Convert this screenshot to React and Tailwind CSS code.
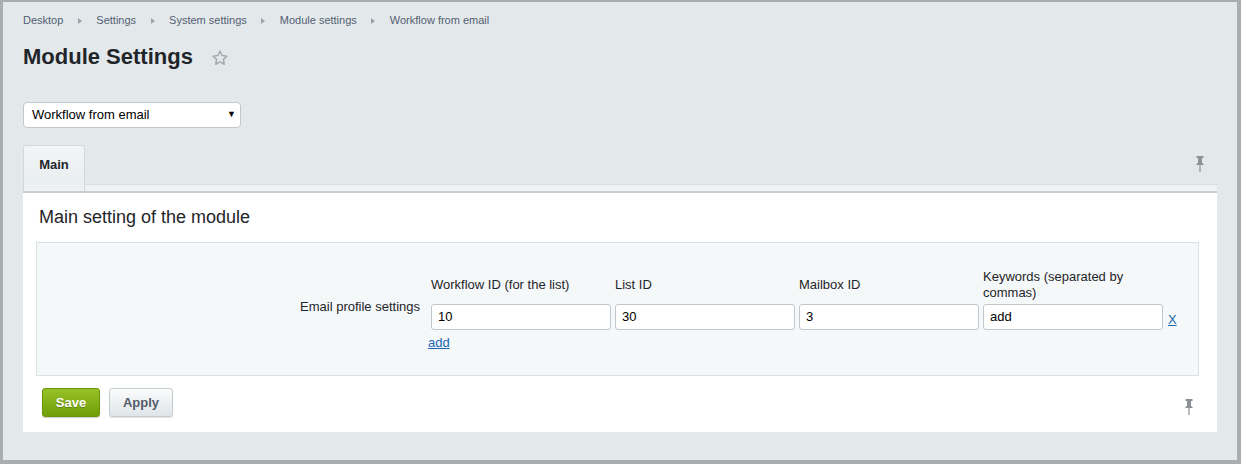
import React from "react";

const crumbs = [
  "Desktop",
  "Settings",
  "System settings",
  "Module settings",
  "Workflow from email",
];

const columns = [
  { label: "Workflow ID (for the list)", value: "10" },
  { label: "List ID", value: "30" },
  { label: "Mailbox ID", value: "3" },
  { label: "Keywords (separated by commas)", value: "add" },
];

function Pin({ className = "" }) {
  return (
    <svg viewBox="0 0 10 16" className={className} fill="#8c9297">
      <rect x="1.5" y="0" width="7" height="2" rx="0.5" />
      <rect x="3" y="2" width="4" height="5" />
      <path d="M1 9 L2.5 7 H7.5 L9 9 Z" />
      <rect x="4.4" y="9" width="1.2" height="7" />
    </svg>
  );
}

function Star() {
  return (
    <svg viewBox="0 0 24 24" className="h-[18px] w-[18px]" fill="none" stroke="#a4aab0" strokeWidth="2" strokeLinejoin="round">
      <path d="M12 2.8l2.8 5.9 6.4.8-4.7 4.4 1.2 6.4L12 17.2l-5.7 3.1 1.2-6.4-4.7-4.4 6.4-.8z" />
    </svg>
  );
}

export default function App() {
  return (
    <div
      className="h-[464px] w-[1241px] overflow-hidden border-t-2 border-r-4 border-b-4 border-l-[3px] border-[#a9adb0] bg-[#e3e9eb] px-5 text-[13px] text-black"
      style={{ fontFamily: '"Liberation Sans", Arial, sans-serif' }}
    >
      {/* breadcrumbs */}
      <div className="flex h-[36px] items-center pt-[1px] text-[11px] text-[#535e72]">
        {crumbs.map((c, i) => (
          <React.Fragment key={c}>
            {i > 0 && (
              <span className="mx-[14.5px] inline-block h-0 w-0 border-y-[3px] border-l-[4px] border-y-transparent border-l-[#9aa2ab]" />
            )}
            <span>{c}</span>
          </React.Fragment>
        ))}
      </div>

      {/* title */}
      <div className="mt-[4px] flex h-[30px] items-center">
        <h1 className="text-[22px] font-bold leading-none text-[#1f2529]">Module Settings</h1>
        <span className="ml-[18px] mt-[2px]">
          <Star />
        </span>
      </div>

      {/* module select */}
      <div className="mt-[30px] flex h-[26px] w-[218px] items-center justify-between rounded-[4px] border border-[#c3c7cb] bg-white pr-[4px] pl-[8px]">
        <span>Workflow from email</span>
        <span className="text-[9px]">▼</span>
      </div>

      {/* tabs */}
      <div className="mt-[17px]">
        <div className="flex items-end justify-between">
          <div className="flex h-[39px] w-[62px] items-center justify-center rounded-t-[3px] border border-b-0 border-[#d3d8db] bg-gradient-to-b from-[#f2f5f6] to-[#e9eef0] font-bold text-[#1f2529]">
            Main
          </div>
          <Pin className="mb-[12px] mr-[12px] h-[16px] w-[10px]" />
        </div>
        <div className="flex h-[7px]">
          <div className="w-[62px] border-x border-[#d3d8db] bg-[#edf1f3]" />
          <div className="flex-1 border-t border-[#d8dde0] bg-[#eef2f3]" />
        </div>
        <div className="h-[2px] bg-[#c9ced1]" />

        {/* panel */}
        <div className="h-[239px] bg-white pl-[13px] pr-[18px] pt-[13px]">
          <h2 className="pl-[3px] text-[18px] leading-[22px] text-[#1f2529]">Main setting of the module</h2>

          <div className="mt-[14px] flex h-[134px] border border-[#dce1e3] bg-[#f5f8f9] pt-[26px]">
            <div className="w-[383px] pt-[30px] text-right leading-[16px] text-[#1f2529]">Email profile settings</div>
            <div className="ml-[11px]">
              <div className="flex gap-[4px]">
                {columns.map((col) => (
                  <div key={col.label} className="w-[180px]">
                    <div className="flex h-[32px] items-center leading-[16px] text-[#1f2529]">{col.label}</div>
                    <div className="mt-[3px] flex h-[26px] items-center rounded-[3px] border border-[#c3c7cb] bg-white px-[6px]">
                      {col.value}
                    </div>
                  </div>
                ))}
                <a className="ml-[1px] mt-[41px] h-[16px] text-[#2067b0] underline">X</a>
              </div>
              <a className="-ml-[3px] mt-[3px] inline-block text-[#2067b0] underline">add</a>
            </div>
          </div>

          {/* buttons */}
          <div className="mt-[12px] flex items-center justify-between pl-[6px] pr-[5px]">
            <div className="flex gap-[9px]">
              <button className="h-[29px] w-[58px] rounded-[3px] border border-[#6a9406] bg-gradient-to-b from-[#98c126] to-[#6e9e04] font-bold text-white shadow-[0_1px_1px_rgba(0,0,0,0.2)] [text-shadow:0_1px_0_rgba(0,0,0,0.25)]">
                Save
              </button>
              <button className="h-[29px] w-[64px] rounded-[3px] border border-[#c6cdd1] bg-gradient-to-b from-[#fbfcfc] to-[#dfe5e8] font-bold text-[#535c69] shadow-[0_1px_1px_rgba(0,0,0,0.12)]">
                Apply
              </button>
            </div>
            <Pin className="mt-[8px] h-[16px] w-[10px]" />
          </div>
        </div>
      </div>
    </div>
  );
}
